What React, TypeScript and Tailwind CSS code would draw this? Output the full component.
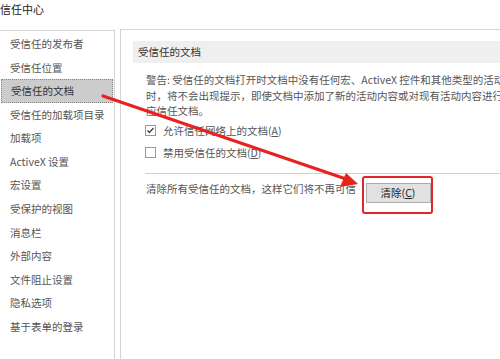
import React from 'react';

const NAV = [
  '受信任的发布者',
  '受信任位置',
  '受信任的文档',
  '受信任的加载项目录',
  '加载项',
  'ActiveX 设置',
  '宏设置',
  '受保护的视图',
  '消息栏',
  '外部内容',
  '文件阻止设置',
  '隐私选项',
  '基于表单的登录',
];

const font = { fontFamily: '"Noto Sans CJK SC", "Noto Sans", sans-serif' };

export default function App() {
  return (
    <div
      className="relative w-[500px] h-[359px] overflow-hidden bg-white text-[10.5px] text-[#444]"
      style={font}
    >
      {/* Title */}
      <div className="h-[29px] pt-[1px] text-[11px] leading-[17px] text-[#222]">信任中心</div>

      <div className="flex h-[330px] gap-[5px]">
        {/* Left nav */}
        <div className="w-[115px] shrink-0 border-t border-r border-[#d4d4d4] pt-[1px] mt-[1px]">
          {NAV.map((item, i) => (
            <div
              key={item}
              className={
                i === 2
                  ? 'mx-[1px] h-[23.6px] flex items-center pl-[9px] bg-[#cccccc] border border-dotted border-[#888] text-[#333] whitespace-nowrap'
                  : 'h-[23.6px] flex items-center pl-[10px] text-[#555] whitespace-nowrap'
              }
            >
              {item}
            </div>
          ))}
        </div>

        {/* Right content */}
        <div className="flex-1 min-w-0 border-t border-l border-[#d4d4d4] pl-[12px] pt-[11px] overflow-hidden">
          <div className="h-[22px] bg-[#efefef] flex items-center pl-[5px] text-[#333]">受信任的文档</div>

          <div className="pl-[13px] pt-[9px] leading-[15.5px] text-[#555]">
            <div className="whitespace-nowrap">警告: 受信任的文档打开时文档中没有任何宏、ActiveX 控件和其他类型的活动</div>
            <div className="whitespace-nowrap">时，将不会出现提示，即使文档中添加了新的活动内容或对现有活动内容进行</div>
            <div>应信任文档。</div>
          </div>

          <div className="pl-[12px] pt-[1px] text-[#555]">
            <div className="h-[22px] flex items-center gap-[7px]">
              <span className="w-[11px] h-[11px] border border-[#999] bg-white flex items-center justify-center">
                <svg width="9" height="9" viewBox="0 0 9 9">
                  <path d="M1.5 4.5 L3.5 6.5 L7.5 2" stroke="#333" strokeWidth="1.2" fill="none" />
                </svg>
              </span>
              <span>
                允许信任网络上的文档(<span className="underline">A</span>)
              </span>
            </div>
            <div className="h-[22px] flex items-center gap-[7px]">
              <span className="w-[11px] h-[11px] border border-[#999] bg-white" />
              <span>
                禁用受信任的文档(<span className="underline">D</span>)
              </span>
            </div>
          </div>

          <div className="ml-[12px] mt-[9px] border-t border-[#cfcfcf]" />

          <div className="pl-[13px] mt-[2px] flex items-start text-[#555] whitespace-nowrap">
            <span className="mt-[5px] leading-[15px]">清除所有受信任的文档，这样它们将不再可信</span>
            <div className="ml-[6px] rounded-[3px] border-[2.5px] border-[#e0262a] pl-[1.5px] pt-[5.5px] pb-[8.5px]">
              <div className="w-[65px] h-[20px] bg-[#e1e1e1] border border-[#adadad] flex items-center justify-center text-[#222]">
                清除(<span className="underline">C</span>)
              </div>
            </div>
          </div>
        </div>
      </div>

      {/* Red annotation arrow */}
      <svg className="absolute left-0 top-0 pointer-events-none" width="500" height="359">
        <line x1="103" y1="96" x2="346" y2="179" stroke="#e8231f" strokeWidth="3.2" strokeLinecap="round" />
        <polygon points="358,184 340,187 346,173" fill="#e8231f" />
      </svg>
    </div>
  );
}
